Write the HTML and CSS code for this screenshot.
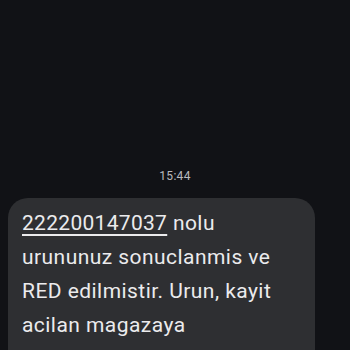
FILE: index.html
```html
<!DOCTYPE html>
<html lang="tr">
<head>
<meta charset="utf-8">
<link rel="stylesheet" href="styles.css">
</head>
<body>
<div class="screen">
  <div class="time">15:44</div>
  <div class="bubble">
    <p class="msg"><span class="num">222200147037</span> nolu<br>urununuz sonuclanmis ve<br>RED edilmistir. Urun, kayit<br>acilan magazaya<br>gonderilmistir. Urununuzu</p>
  </div>
</div>
</body>
</html>
```
FILE: styles.css
```css
html, body {
  margin: 0;
  padding: 0;
  background: #111216;
}
.screen {
  width: 350px;
  height: 350px;
  overflow: hidden;
  background: #111216;
  display: flex;
  flex-direction: column;
  font-family: Roboto, "Noto Sans", sans-serif;
}
.time {
  margin-top: 168px;
  text-align: center;
  font-size: 12px;
  line-height: 16px;
  color: #b9babe;
  letter-spacing: 0.3px;
}
.bubble {
  margin-top: 14px;
  margin-left: 8px;
  width: 307px;
  box-sizing: border-box;
  background: #2e2f32;
  border-radius: 20px;
  padding: 8px 14px 20px 14px;
}
.msg {
  margin: 0;
  font-size: 21px;
  line-height: 34px;
  color: #ebebed;
  letter-spacing: 0.45px;
  white-space: nowrap;
}
.num {
  text-decoration: underline;
  text-decoration-thickness: 2px;
  text-underline-offset: 4px;
  letter-spacing: 0.3px;
}
```
